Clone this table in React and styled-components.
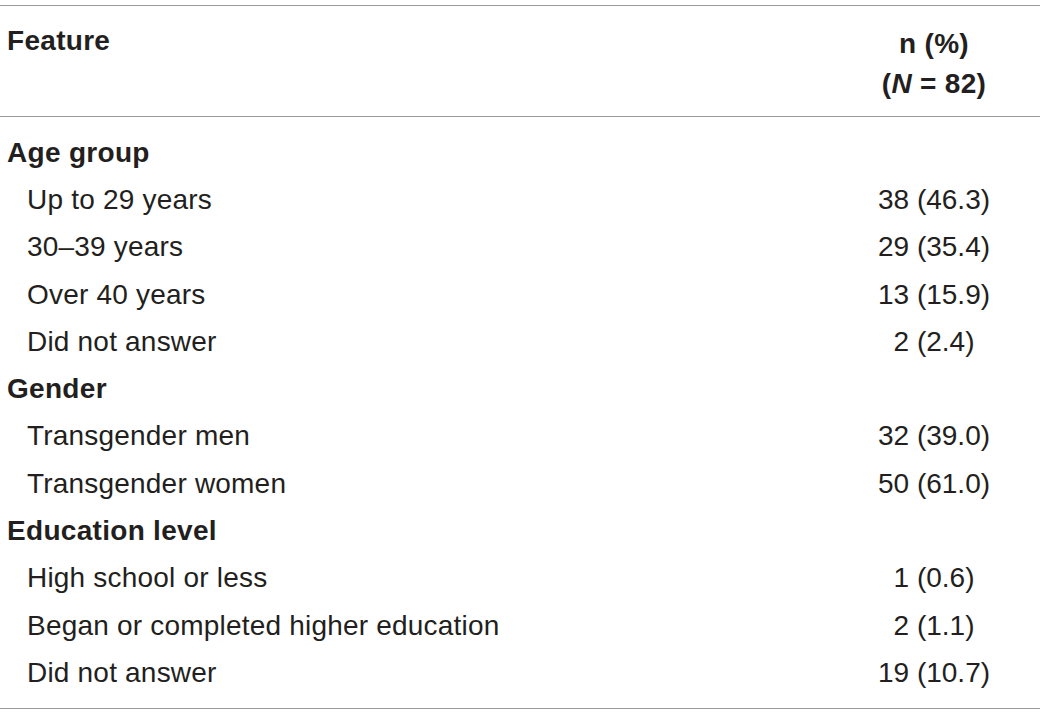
import React from 'react'
import styled, { createGlobalStyle } from 'styled-components'

const GlobalStyle = createGlobalStyle`
  html, body {
    margin: 0;
    padding: 0;
    background: #fff;
  }
  body {
    font-family: "Liberation Sans", Arial, sans-serif;
    color: #231f20;
  }
`

const Table = styled.div`
  width: 1040px;
  padding-top: 5px;
`

const HeaderRow = styled.div`
  display: grid;
  grid-template-columns: 1fr 212px;
  border-top: 1.5px solid #9a9a9a;
  border-bottom: 1.5px solid #9a9a9a;
  padding: 15px 0 12px;
  font-weight: 700;
  font-size: 28px;
  line-height: 40px;
  letter-spacing: 0.3px;
`

const HeaderCell = styled.div`
  padding-left: ${({ $right }) => ($right ? '0' : '7px')};
  margin-top: ${({ $right }) => ($right ? '3px' : '0')};
  text-align: ${({ $right }) => ($right ? 'center' : 'left')};
`

const Body = styled.div`
  padding: 12px 0 11px;
  border-bottom: 1.5px solid #9a9a9a;
`

const Row = styled.div`
  display: grid;
  grid-template-columns: 1fr 212px;
  height: 47.3px;
  align-items: center;
  font-size: 28px;
  font-weight: ${({ $group }) => ($group ? 700 : 400)};
  letter-spacing: ${({ $group }) => ($group ? '0.3px' : '0.2px')};
`

const Label = styled.div`
  padding-left: ${({ $group }) => ($group ? '7px' : '27px')};
`

const Value = styled.div`
  text-align: center;
  letter-spacing: 0;
`

const groups = [
  {
    name: 'Age group',
    items: [
      ['Up to 29 years', '38 (46.3)'],
      ['30–39 years', '29 (35.4)'],
      ['Over 40 years', '13 (15.9)'],
      ['Did not answer', '2 (2.4)'],
    ],
  },
  {
    name: 'Gender',
    items: [
      ['Transgender men', '32 (39.0)'],
      ['Transgender women', '50 (61.0)'],
    ],
  },
  {
    name: 'Education level',
    items: [
      ['High school or less', '1 (0.6)'],
      ['Began or completed higher education', '2 (1.1)'],
      ['Did not answer', '19 (10.7)'],
    ],
  },
]

const App = () => {
  return (
    <>
      <GlobalStyle />
      <Table>
        <HeaderRow>
          <HeaderCell>Feature</HeaderCell>
          <HeaderCell $right>
            n (%)
            <br />
            (<i>N</i> = 82)
          </HeaderCell>
        </HeaderRow>
        <Body>
          {groups.map((group) => (
            <React.Fragment key={group.name}>
              <Row $group>
                <Label $group>{group.name}</Label>
                <Value />
              </Row>
              {group.items.map(([label, value], i) => (
                <Row key={i}>
                  <Label>{label}</Label>
                  <Value>{value}</Value>
                </Row>
              ))}
            </React.Fragment>
          ))}
        </Body>
      </Table>
    </>
  )
}

export default App
